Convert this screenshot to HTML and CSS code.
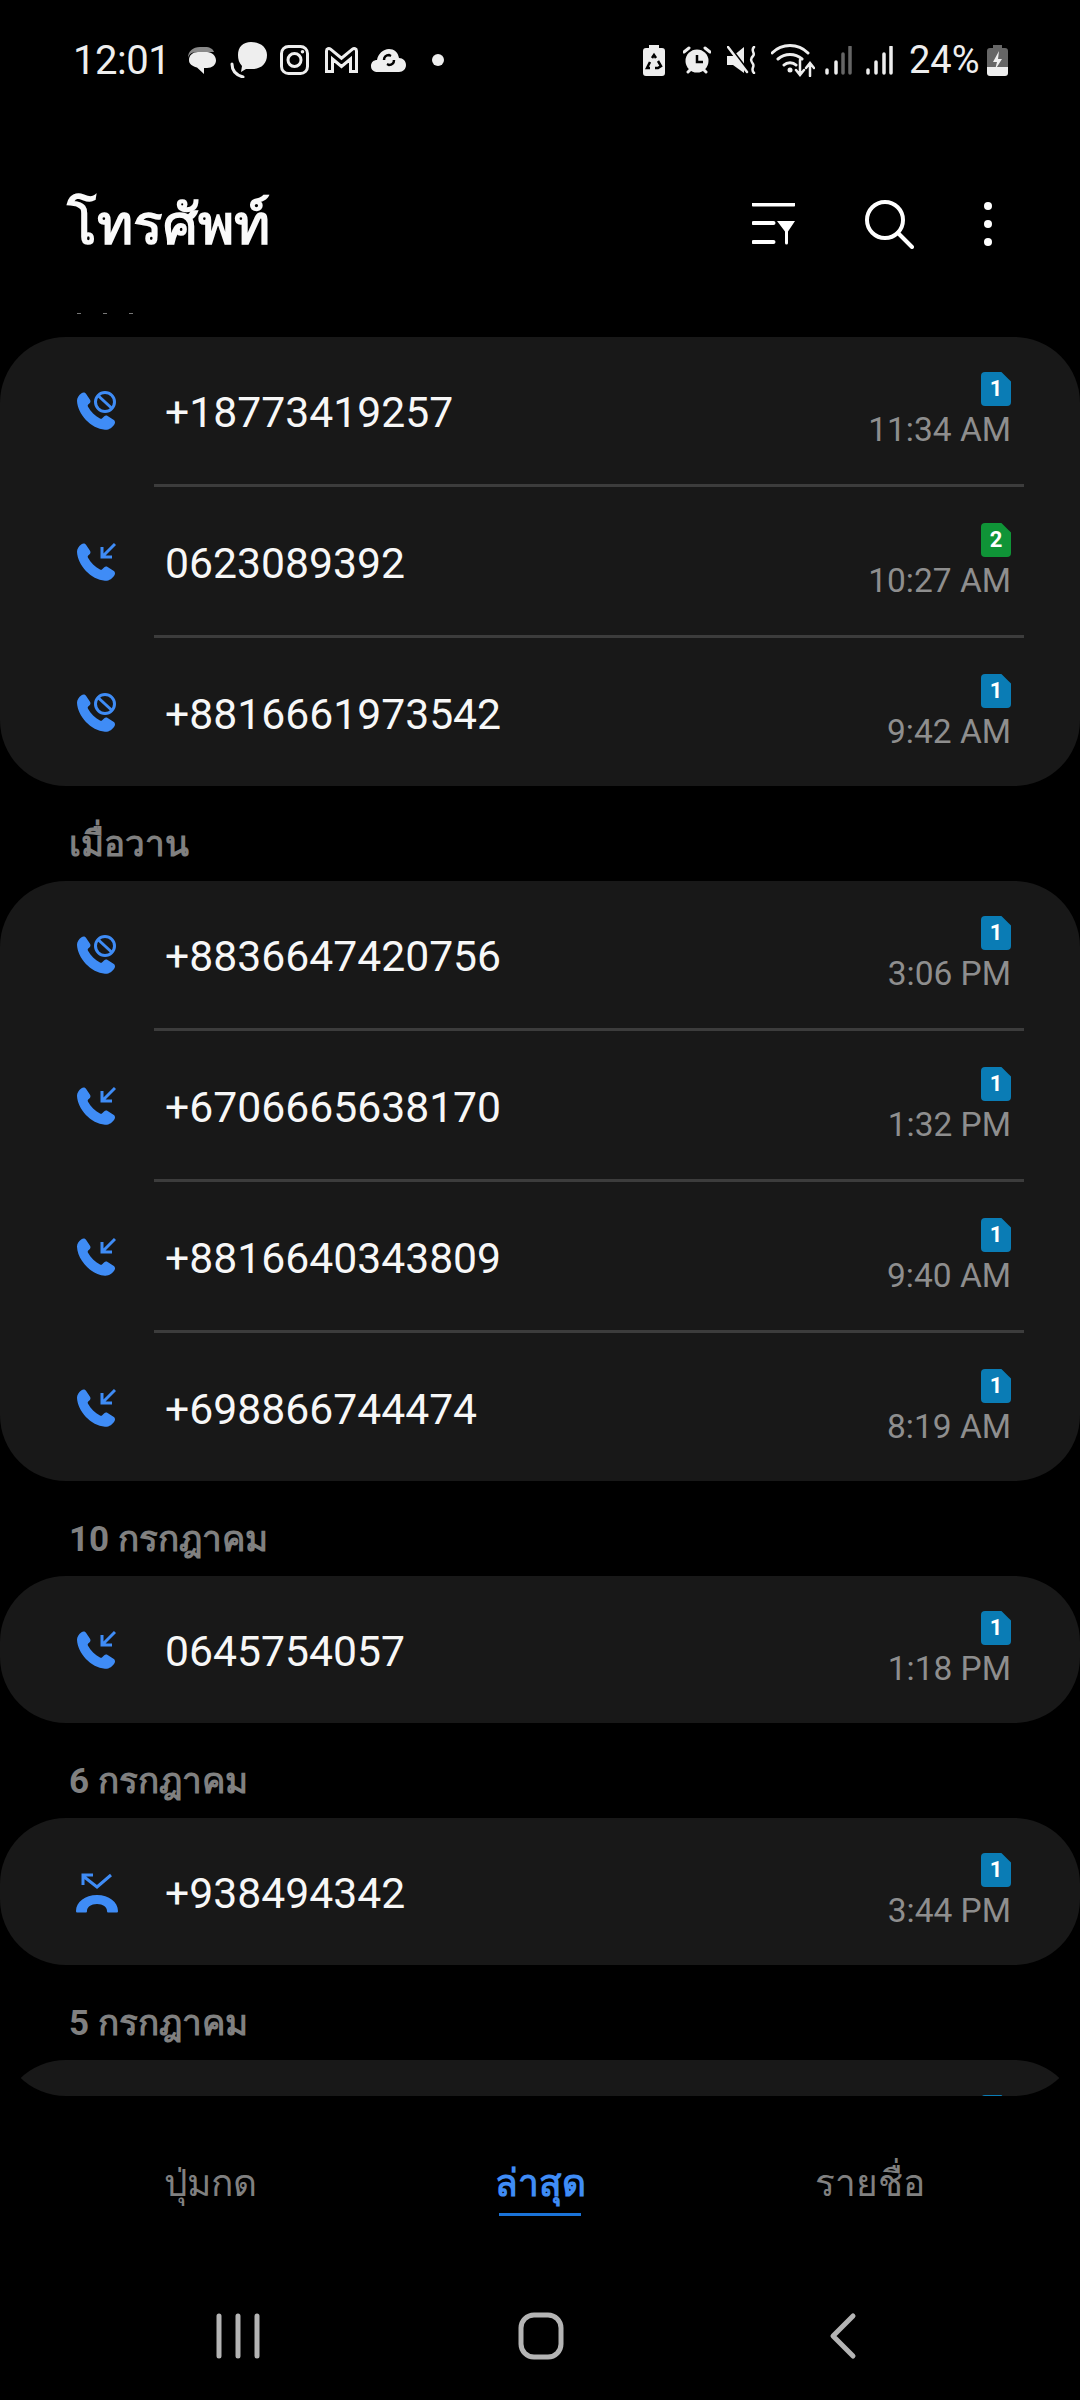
FILE: index.html
```html
<!DOCTYPE html>
<html lang="th">
<head>
    <meta charset="UTF-8">
    <meta name="viewport" content="width=device-width, initial-scale=1.0">
    <title>โทรศัพท์</title>
    <link rel="stylesheet" href="styles.css">
</head>
<body>
    <!-- Shared call icons -->
    <svg class="defs" aria-hidden="true">
        <symbol id="handset" viewBox="0 0 40 40">
            <path d="M5.500 2.200C7 1 9 1.200 10 2.700L14 8.700C14.800 10 14.600 11.200 13.600 12.200L12.200 13.600C11.600 14.200 11.600 15 12 15.800C14.600 20.600 19 25 24 27.600C24.800 28 25.600 27.900 26.200 27.300L28 25.500C29 24.500 30.400 24.300 31.600 25L37.500 28.700C39 29.700 39.500 31.400 38.600 32.900C36.600 36.400 33.200 38.900 29 38.700C15 38 1.500 23 1 9.800C.9 6.800 2.800 4.200 5.500 2.200Z"/>
        </symbol>
        <symbol id="call-in" viewBox="0 0 40 40">
            <use href="#handset"/>
            <path class="mark" d="M39 2 26 15M26 5v10h10"/>
        </symbol>
        <symbol id="call-block" viewBox="0 0 40 40">
            <use href="#handset"/>
            <circle class="mark" cx="29" cy="11" r="9.500"/>
            <path class="mark" d="M22.500 5 35.500 17"/>
        </symbol>
        <symbol id="call-out" viewBox="0 0 44 40">
            <path d="M1 38c0-9 9-16 21-16s21 7 21 16c0 1-.5 1.500-1.500 1.500h-8c-1 0-1.500-.5-1.500-1.500 0-4-4-7-10-7s-10 3-10 7c0 1-.5 1.500-1.500 1.500h-8C1.500 39.500 1 39 1 38z"/>
            <path class="mark" d="M36 2 22 14 8 3M18 2H8v10"/>
        </symbol>
    </svg>

    <!-- Status bar -->
    <div class="status-bar">
        <div class="status-left">
            <span class="status-text clock">12:01</span>
            <svg width="30" height="28" viewBox="0 0 30 28"><path class="dim" d="M1 12C1 5 6 1 13 1h5c5 0 8 2 9 5H10C5 6 2 8 1 12z"/><path class="solid" d="M11 6h9c5 0 9 4 9 8.500S25 22 20 22h-3v6l-7-6.500C5 20 2 18 2 14c0-5 4-8 9-8z"/></svg>
            <svg width="37" height="36" viewBox="0 0 37 36"><path class="solid" d="M21 0c9 0 16 5 16 13 0 9-6 14-15 14h-6l-5 3 1-6c-3-3-4-7-4-11C8 5 13 0 21 0z"/><path class="line" d="M2 22c0 6 4 11 11 13"/></svg>
            <svg width="29" height="30" viewBox="0 0 29 30"><rect class="line" x="1.500" y="1.500" width="26" height="27" rx="7"/><circle class="line" cx="14.500" cy="15" r="6.500"/><circle class="solid" cx="22.500" cy="6.800" r="1.800"/></svg>
            <svg class="m-insta" width="33" height="26" viewBox="0 0 33 26"><path class="line" d="M1.500 24.500V4c0-2.500 2.500-3 4-1.800l11 9 11-9c1.500-1.200 4-.7 4 1.800v20.500h-6V12l-9 7.500-9-7.500v12.500z"/></svg>
            <svg width="35" height="24" viewBox="0 0 35 24"><path class="solid" d="M7 24c-4 0-7-2-7-6s3-6 6-6c1-6 6-11 12-11 5 0 9 3 10 9 4 0 7 3 7 7s-3 7-7 7z"/><path class="cut" d="M13 12c0-3 2-5 5-5l2 1M23 12c0 3-2 5-5 5l-2-1"/></svg>
            <span class="status-dot"></span>
        </div>
        <div class="status-right">
            <svg width="22" height="31" viewBox="0 0 22 31"><path class="solid" d="M6 0h10v3h3c2 0 3 1 3 3v22c0 2-1 3-3 3H3c-2 0-3-1-3-3V6c0-2 1-3 3-3h3z"/><path class="cut" d="M9 13l2-3 2 3M15 16l3 5-3 2h-3M7 23H4l3-6"/></svg>
            <svg class="ml-18" width="28" height="28" viewBox="0 0 28 28"><circle class="solid" cx="14" cy="15" r="11.500"/><path class="line" d="M1 6l5-4M27 6l-5-4M5 26l2-2M23 26l-2-2"/><path class="cut" d="M14 9v7h6"/></svg>
            <svg class="ml-16" width="30" height="28" viewBox="0 0 30 28"><path class="solid" d="M0 10h6l11-9v26L6 19H0z"/><path class="cut" d="M2 0l20 26"/><path class="line thin" d="M1 1l19 25M27 1c-4 4 2 6-1 9s-2 5 0 8-3 5 1 9"/></svg>
            <svg class="ml-14" width="44" height="33" viewBox="0 0 44 33"><path class="line" d="M1 9c10-10 26-10 36 0M7 15c7-6 17-6 24 0M13 21c3-3 9-3 12 0"/><circle class="solid" cx="19" cy="26" r="2.500"/><path class="line thin" d="M29 16v14M25 26l4 5 4-5M39 32V20M35 24l4-5 4 5"/></svg>
            <svg class="ml-10" width="27" height="29" viewBox="0 0 27 29"><path class="bar" d="M2 24v3M11 16v11"/><path class="bar faint" d="M18 8v19M25 1v26"/></svg>
            <svg class="ml-14" width="27" height="29" viewBox="0 0 27 29"><path class="bar" d="M2 24v3M10 16v11M18 8v19M25 1v26"/></svg>
            <span class="status-text percent ml-16">24%</span>
            <svg class="ml-7" width="21" height="31" viewBox="0 0 21 31"><path class="dim-fill" d="M6 0h9v3h3c2 0 3 1 3 3v16H0V6c0-2 1-3 3-3h3z"/><path class="solid" d="M0 22h21v6c0 2-1 3-3 3H3c-2 0-3-1-3-3z"/><path class="solid" d="M12 6 6 17h4l-2 8 7-11h-4z"/></svg>
        </div>
    </div>

    <!-- Title bar -->
    <div class="title-bar">
        <h1 class="title">โทรศัพท์</h1>
        <div class="title-actions">
            <svg width="43" height="42" viewBox="0 0 43 42"><path class="action" d="M1.500 1.500h40M1.500 20h20M1.500 39h20"/><path class="action-fill" d="M25 18h18l-7 10.500v11.500a1.500 1.500 0 0 1-3 0V28.500z"/></svg>
            <svg width="49" height="49" viewBox="0 0 49 49"><circle class="action" cx="20" cy="20" r="18"/><path class="action" d="M33 33l14 14"/></svg>
            <svg width="8" height="44" viewBox="0 0 8 44"><circle class="action-fill" cx="4" cy="4" r="4"/><circle class="action-fill" cx="4" cy="22" r="4"/><circle class="action-fill" cx="4" cy="40" r="4"/></svg>
        </div>
    </div>

    <!-- Call log -->
    <div class="call-log">
        <div class="scroll-edge"><span></span><span></span><span></span></div>
        <div class="card">
            <div class="row">
                <svg class="call-icon"><use href="#call-block"/></svg>
                <span class="number">+18773419257</span>
                <div class="meta"><span class="sim">1</span><span class="time">11:34 AM</span></div>
            </div>
            <div class="divider"></div>
            <div class="row">
                <svg class="call-icon"><use href="#call-in"/></svg>
                <span class="number">0623089392</span>
                <div class="meta"><span class="sim green">2</span><span class="time">10:27 AM</span></div>
            </div>
            <div class="divider"></div>
            <div class="row">
                <svg class="call-icon"><use href="#call-block"/></svg>
                <span class="number">+8816661973542</span>
                <div class="meta"><span class="sim">1</span><span class="time">9:42 AM</span></div>
            </div>
        </div>

        <div class="day-label">เมื่อวาน</div>
        <div class="card">
            <div class="row">
                <svg class="call-icon"><use href="#call-block"/></svg>
                <span class="number">+8836647420756</span>
                <div class="meta"><span class="sim">1</span><span class="time">3:06 PM</span></div>
            </div>
            <div class="divider"></div>
            <div class="row">
                <svg class="call-icon"><use href="#call-in"/></svg>
                <span class="number">+6706665638170</span>
                <div class="meta"><span class="sim">1</span><span class="time">1:32 PM</span></div>
            </div>
            <div class="divider"></div>
            <div class="row">
                <svg class="call-icon"><use href="#call-in"/></svg>
                <span class="number">+8816640343809</span>
                <div class="meta"><span class="sim">1</span><span class="time">9:40 AM</span></div>
            </div>
            <div class="divider"></div>
            <div class="row">
                <svg class="call-icon"><use href="#call-in"/></svg>
                <span class="number">+698866744474</span>
                <div class="meta"><span class="sim">1</span><span class="time">8:19 AM</span></div>
            </div>
        </div>

        <div class="day-label">10 กรกฎาคม</div>
        <div class="card">
            <div class="row">
                <svg class="call-icon"><use href="#call-in"/></svg>
                <span class="number">0645754057</span>
                <div class="meta"><span class="sim">1</span><span class="time">1:18 PM</span></div>
            </div>
        </div>

        <div class="day-label">6 กรกฎาคม</div>
        <div class="card">
            <div class="row">
                <svg class="call-icon wide"><use href="#call-out"/></svg>
                <span class="number">+938494342</span>
                <div class="meta"><span class="sim">1</span><span class="time">3:44 PM</span></div>
            </div>
        </div>

        <div class="day-label">5 กรกฎาคม</div>
        <div class="card">
            <div class="row">
                <div class="meta"><span class="sim"></span><span class="time"></span></div>
            </div>
        </div>
    </div>

    <!-- Tabs -->
    <div class="tabs">
        <div class="tab">ปุ่มกด</div>
        <div class="tab active">ล่าสุด</div>
        <div class="tab">รายชื่อ</div>
    </div>

    <!-- Navigation bar -->
    <div class="nav-bar">
        <svg width="80" height="50" viewBox="0 0 80 50"><path class="nav-line" d="M21 5v40M40 5v40M59 5v40"/></svg>
        <svg width="80" height="50" viewBox="0 0 80 50"><rect class="nav-line" x="20" y="4" width="40" height="42" rx="13"/></svg>
        <svg width="80" height="50" viewBox="0 0 80 50"><path class="nav-line" d="M49 5 29 25l20 20"/></svg>
    </div>
</body>
</html>
```

FILE: styles.css
```css
/* General */
html, body {
    margin: 0;
    padding: 0;
    background: #000;
}
body {
    width: 1080px;
    height: 2400px;
    overflow: hidden;
    font-family: Roboto, "Noto Sans", "DejaVu Sans", sans-serif;
    color: #fff;
}
.defs {
    position: absolute;
    width: 0;
    height: 0;
}

/* Status bar */
.status-bar {
    height: 120px;
    padding: 0 72px 0 73px;
    box-sizing: border-box;
    display: flex;
    justify-content: space-between;
    align-items: center;
}
.status-left, .status-right {
    display: flex;
    align-items: center;
    gap: 13px;
}
.status-right {
    gap: 0;
}
.status-text {
    font-size: 38px;
    color: #eee;
    white-space: nowrap;
}
.clock {
    width: 92px;
    margin-right: 9px;
    font-size: 40px;
    letter-spacing: -0.5px;
}
.percent {
    width: 71px;
}
.m-insta {
    margin-left: 3px;
}
.ml-18 { margin-left: 18px; }
.ml-16 { margin-left: 16px; }
.ml-14 { margin-left: 14px; }
.ml-10 { margin-left: 10px; }
.ml-7 { margin-left: 7px; }
.status-dot {
    width: 12px;
    height: 12px;
    margin-left: 13px;
    border-radius: 50%;
    background: #eee;
}
.solid {
    fill: #eee;
}
.dim {
    fill: #8a8a8a;
}
.dim-fill {
    fill: #666;
}
.line {
    fill: none;
    stroke: #eee;
    stroke-width: 3;
    stroke-linecap: round;
}
.line.thin {
    stroke-width: 2.5;
}
.cut {
    fill: none;
    stroke: #000;
    stroke-width: 2.5;
}
.bar {
    fill: none;
    stroke: #eee;
    stroke-width: 3.500;
    stroke-linecap: round;
}
.bar.faint {
    stroke: #666;
}

/* Title bar */
.title-bar {
    height: 192px;
    padding: 16px 88px 0 67px;
    box-sizing: border-box;
    display: flex;
    justify-content: space-between;
    align-items: center;
}
.title {
    margin: 0;
    font-size: 55px;
    font-weight: 700;
    color: #fafafa;
}
.title-actions {
    display: flex;
    align-items: center;
    gap: 70px;
}
.action {
    fill: none;
    stroke: #fff;
    stroke-width: 4;
    stroke-linecap: round;
}
.action-fill {
    fill: #fff;
}

/* Call log */
.call-log {
    height: 1784px;
    overflow: hidden;
    border-radius: 0 0 66px 66px;
}
.scroll-edge {
    height: 25px;
    padding-left: 77px;
    display: flex;
    gap: 22px;
}
.scroll-edge span {
    width: 4px;
    height: 1px;
    margin-top: 1px;
    background: #777;
}
.day-label {
    height: 95px;
    box-sizing: border-box;
    padding: 41px 0 0 69px;
    font-size: 35px;
    line-height: 36px;
    font-weight: 700;
    color: #808080;
}
.card {
    background: #181818;
    border-radius: 66px;
}
.row {
    height: 147px;
    padding: 3px 69px 0 76px;
    box-sizing: border-box;
    display: flex;
    align-items: center;
}
.call-icon {
    width: 40px;
    height: 40px;
    flex: none;
    margin-top: -3px;
    fill: #3f8cf6;
}
.call-icon.wide {
    width: 44px;
    margin-left: -1px;
    margin-right: -3px;
    margin-top: 0;
}
.mark {
    fill: none;
    stroke: #3f8cf6;
    stroke-width: 3;
}
.number {
    margin-left: 49px;
    font-size: 42.7px;
    color: #f7f7f7;
}
.meta {
    margin-left: auto;
    display: flex;
    flex-direction: column;
    align-items: flex-end;
}
.sim {
    width: 30px;
    height: 34px;
    box-sizing: border-box;
    border-radius: 4px;
    background: #0a7cb5;
    clip-path: polygon(0 0, 68% 0, 100% 28%, 100% 100%, 0 100%);
    color: #fff;
    font-size: 22px;
    font-weight: 700;
    line-height: 34px;
    text-align: center;
}
.sim.green {
    background: #0f9437;
}
.time {
    height: 46px;
    font-size: 33.5px;
    line-height: 48px;
    color: #8e8e8e;
}
.divider {
    height: 3px;
    margin: 0 56px 1px 154px;
    background: #3c3c3c;
}

/* Tabs */
.tabs {
    height: 176px;
    padding: 63px 45px 0;
    box-sizing: border-box;
    display: flex;
}
.tab {
    flex: 1;
    text-align: center;
    font-size: 37px;
    line-height: 50px;
    color: #808080;
}
.tab.active {
    font-weight: 700;
    color: #3f8cf6;
}
.tab.active::after {
    content: "";
    display: block;
    width: 82px;
    height: 3px;
    margin: 4px auto 0;
    background: #1a73d8;
}

/* Navigation bar */
.nav-bar {
    height: 128px;
    padding: 39px 0 0 198px;
    box-sizing: border-box;
    display: flex;
    align-items: flex-start;
    gap: 223px;
}
.nav-line {
    fill: none;
    stroke: #b4b4b4;
    stroke-width: 5;
    stroke-linecap: round;
    stroke-linejoin: round;
}
```
